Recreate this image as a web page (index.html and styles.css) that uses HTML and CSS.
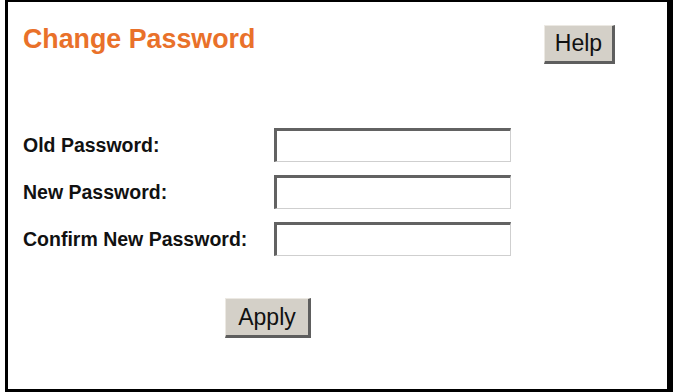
FILE: index.html
```html
<!DOCTYPE html>
<html lang="en">
<head>
<meta charset="utf-8">
<title>Change Password</title>
<link rel="stylesheet" href="styles.css">
</head>
<body>
<div class="frame">
  <div class="header">
    <h1 class="title">Change Password</h1>
    <button class="btn btn-help" type="button">Help</button>
  </div>
  <form class="form">
    <label class="label" for="old">Old Password:</label>
    <input class="field" id="old" type="password">
    <label class="label" for="new">New Password:</label>
    <input class="field" id="new" type="password">
    <label class="label" for="confirm">Confirm New Password:</label>
    <input class="field" id="confirm" type="password">
  </form>
  <div class="actions">
    <button class="btn btn-apply" type="button">Apply</button>
  </div>
</div>
</body>
</html>
```
FILE: styles.css
```css
html, body {
  margin: 0;
  padding: 0;
  background: #ffffff;
}

.frame {
  margin-left: 5px;
  width: 668px;
  height: 392px;
  box-sizing: border-box;
  border-style: solid;
  border-color: #000000;
  border-width: 2px 6px 3px 3px;
  padding: 22px 52px 0 15px;
  font-family: "Liberation Sans", Arial, sans-serif;
}

.header {
  display: flex;
  justify-content: space-between;
  align-items: flex-start;
}

.title {
  margin: 0;
  font-size: 26.8px;
  line-height: 30px;
  font-weight: bold;
  color: #e9712a;
}

.btn {
  font-family: "Liberation Sans", Arial, sans-serif;
  color: #111111;
  background: #d4d0c8;
  border-style: solid;
  border-width: 1px 3px 3px 1px;
  border-color: #ece9e3 #5e5e5e #5e5e5e #ece9e3;
  padding: 0;
  margin: 0;
  box-sizing: border-box;
}

.btn-help {
  width: 71px;
  height: 39px;
  margin-top: 1px;
  font-size: 23px;
}

.form {
  display: grid;
  grid-template-columns: 251px 237px;
  row-gap: 13px;
  align-items: center;
  margin: 64px 0 0 0;
}

.label {
  font-size: 19.5px;
  font-weight: bold;
  color: #111111;
}

.field {
  width: 237px;
  height: 34px;
  box-sizing: border-box;
  margin: 0;
  padding: 0;
  background: #ffffff;
  border-style: solid;
  border-width: 3px 1px 1px 3px;
  border-color: #626262 #cfcfcf #cfcfcf #626262;
}

.actions {
  padding-left: 202px;
  margin-top: 42px;
}

.btn-apply {
  width: 86px;
  height: 40px;
  font-size: 23px;
}
```
